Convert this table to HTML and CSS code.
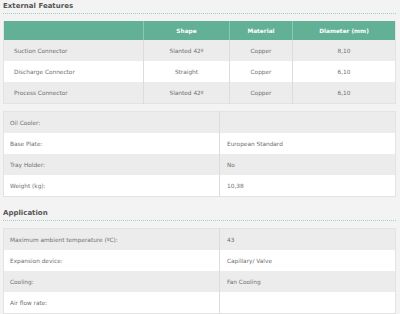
FILE: index.html
```html
<!DOCTYPE html>
<html>
<head>
<meta charset="utf-8">
<link rel="stylesheet" href="styles.css">
</head>
<body>
<div class="page">
  <h2 class="section-title">External Features</h2>
  <table class="spec conn">
    <colgroup><col class="c1"><col class="c2"><col class="c3"><col></colgroup>
    <thead>
      <tr><th class="name"></th><th>Shape</th><th>Material</th><th>Diameter (mm)</th></tr>
    </thead>
    <tbody>
      <tr><td class="name">Suction Connector</td><td>Slanted 42º</td><td>Copper</td><td>8,10</td></tr>
      <tr><td class="name">Discharge Connector</td><td>Straight</td><td>Copper</td><td>6,10</td></tr>
      <tr><td class="name">Process Connector</td><td>Slanted 42º</td><td>Copper</td><td>6,10</td></tr>
    </tbody>
  </table>

  <table class="spec kv kv-first">
    <colgroup><col class="k1"><col></colgroup>
    <tbody>
      <tr><td class="key">Oil Cooler:</td><td class="val"></td></tr>
      <tr><td class="key">Base Plate:</td><td class="val">European Standard</td></tr>
      <tr><td class="key">Tray Holder:</td><td class="val">No</td></tr>
      <tr><td class="key">Weight (kg):</td><td class="val">10,38</td></tr>
    </tbody>
  </table>

  <h2 class="section-title section-title-next">Application</h2>
  <table class="spec kv">
    <colgroup><col class="k1"><col></colgroup>
    <tbody>
      <tr><td class="key">Maximum ambient temperature (ºC):</td><td class="val">43</td></tr>
      <tr><td class="key">Expansion device:</td><td class="val">Capillary/ Valve</td></tr>
      <tr><td class="key">Cooling:</td><td class="val">Fan Cooling</td></tr>
      <tr><td class="key">Air flow rate:</td><td class="val"></td></tr>
    </tbody>
  </table>
</div>
</body>
</html>
```
FILE: styles.css
```css
html, body {
  margin: 0;
  padding: 0;
  background: #f3f3f3;
}
.page {
  padding: 0 4px 0 3px;
  font-family: "DejaVu Sans", Verdana, sans-serif;
  font-size: 5.8px;
  color: #707070;
}
.section-title {
  margin: 0 0 7px 0;
  font-size: 7px;
  font-weight: bold;
  color: #555;
  line-height: 13px;
  border-bottom: 1px dotted #a6d1c1;
}
.section-title-next {
  margin-top: 10px;
}
.spec {
  width: 100%;
  table-layout: fixed;
  border-collapse: collapse;
  border: 1px solid #e3e3e3;
}
.conn { border-top: none; }
.conn .c1 { width: 140px; }
.conn .c2 { width: 86px; }
.conn .c3 { width: 63px; }
.kv .k1 { width: 216px; }
.spec td, .spec th {
  padding: 0;
  white-space: nowrap;
}
.conn th {
  height: 19px;
  background: #62b096;
  color: #fff;
  font-weight: bold;
  text-align: center;
  border-left: 1px solid #8cc7b3;
}
.conn th.name { border-left: none; }
.conn td {
  height: 21px;
  text-align: center;
  border-left: 1px solid #dcdcdc;
}
.conn td.name {
  text-align: left;
  padding-left: 10px;
  border-left: none;
}
.spec tbody tr:nth-child(odd) { background: #ececec; }
.spec tbody tr:nth-child(even) { background: #ffffff; }
.kv-first { margin-top: 7px; }
.kv td { height: 21px; }
.kv .key {
  padding-left: 6px;
}
.kv .val {
  padding-left: 7px;
  border-left: 1px solid #dcdcdc;
}
```
